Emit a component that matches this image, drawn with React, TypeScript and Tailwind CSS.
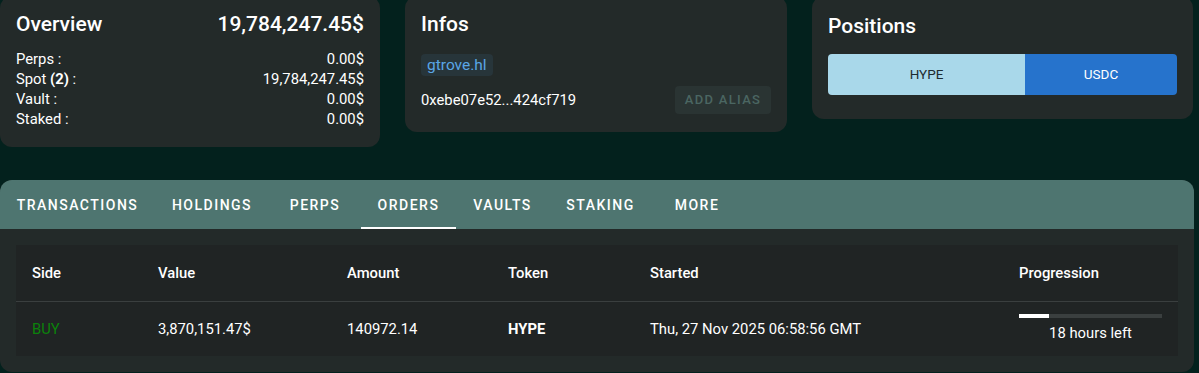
import React from 'react';

const tabs = [
  { label: 'TRANSACTIONS', w: 'w-[155px]' },
  { label: 'HOLDINGS', w: 'w-[114px]' },
  { label: 'PERPS', w: 'w-[92px]' },
  { label: 'ORDERS', w: 'w-[95px]', active: true },
  { label: 'VAULTS', w: 'w-[93px]' },
  { label: 'STAKING', w: 'w-[103px]' },
  { label: 'MORE', w: 'w-[90px]' },
];

const cols = 'grid grid-cols-[126px_189px_161px_142px_369px_1fr]';

function OverviewCard() {
  const rows: [React.ReactNode, string][] = [
    ['Perps :', '0.00$'],
    [<>Spot <b className="font-bold">(2)</b> :</>, '19,784,247.45$'],
    ['Vault :', '0.00$'],
    ['Staked :', '0.00$'],
  ];
  return (
    <div className="bg-[#232a29] rounded-xl px-4 pt-[14px] pb-[18px]">
      <div className="flex justify-between items-center">
        <h2 className="text-[21px] leading-7 font-medium text-white">Overview</h2>
        <span className="text-[21px] leading-7 font-medium text-white">19,784,247.45$</span>
      </div>
      <div className="mt-[11px]">
        {rows.map(([k, v], i) => (
          <div key={i} className="flex justify-between text-[14.8px] leading-5 text-white">
            <span>{k}</span>
            <span>{v}</span>
          </div>
        ))}
      </div>
    </div>
  );
}

function InfosCard() {
  return (
    <div className="bg-[#232a29] rounded-xl px-4 pt-[14px] pb-[18px]">
      <h2 className="text-[21px] leading-7 font-medium text-white">Infos</h2>
      <div className="mt-[15px]">
        <span className="inline-block bg-[#27353a] text-[#5aa6e6] text-[15.5px] leading-[22px] px-[6px] rounded">gtrove.hl</span>
      </div>
      <div className="mt-[9px] flex justify-between items-center">
        <span className="text-[14.8px] text-white">0xebe07e52...424cf719</span>
        <button className="w-[96px] h-[28px] bg-[#2a3433] rounded text-[#4b6662] text-[13px] font-medium tracking-[1.3px]">ADD ALIAS</button>
      </div>
    </div>
  );
}

function PositionsCard() {
  return (
    <div className="bg-[#232a29] rounded-xl px-4 pt-[14px] pb-[24px]">
      <h2 className="text-[21px] leading-7 font-medium text-white mt-[2px]">Positions</h2>
      <div className="mt-[14px] flex h-[41px]">
        <div className="w-[197px] bg-[#a9d8ea] rounded-l-sm flex items-center justify-center text-[13.5px] text-[#1d2b30]">HYPE</div>
        <div className="flex-1 bg-[#2673cc] rounded-r-sm flex items-center justify-center text-[13.5px] text-white">USDC</div>
      </div>
    </div>
  );
}

export default function App() {
  return (
    <div className="bg-[#03211d] h-[373px] overflow-hidden font-['Roboto',sans-serif]">
      <div className="w-[1194px]">
        <div className="grid grid-cols-[380px_382px_381px] gap-[25px] items-start -mt-[4px]">
          <OverviewCard />
          <InfosCard />
          <PositionsCard />
        </div>

        <div className="mt-[33px] bg-[#232a29] rounded-xl overflow-hidden">
          <div className="bg-[#4e7570] h-[49px] flex">
            {tabs.map((t) => (
              <div key={t.label} className={`${t.w} relative flex items-center justify-center text-sm font-medium tracking-[1.5px] text-white`}>
                {t.label}
                {t.active && <div className="absolute left-0 right-0 bottom-0 h-[2px] bg-white" />}
              </div>
            ))}
          </div>
          <div className="p-4">
            <div className="bg-[#202424] text-white text-[14.8px]">
              <div className={`${cols} h-[57px] items-center border-b border-[#3a3f3f] font-medium`}>
                <div className="pl-4">Side</div>
                <div className="pl-4">Value</div>
                <div className="pl-4">Amount</div>
                <div className="pl-4">Token</div>
                <div className="pl-4">Started</div>
                <div className="px-4">Progression</div>
              </div>
              <div className={`${cols} h-[54px] items-center`}>
                <div className="pl-4 text-[#0b820b]">BUY</div>
                <div className="pl-4">3,870,151.47$</div>
                <div className="pl-4">140972.14</div>
                <div className="pl-4 font-bold">HYPE</div>
                <div className="pl-4">Thu, 27 Nov 2025 06:58:56 GMT</div>
                <div className="px-4 self-start pt-[12px] flex flex-col">
                  <div className="h-1 bg-[#3a3f3f]">
                    <div className="h-1 bg-white w-[21%]" />
                  </div>
                  <div className="mt-[5px] text-center leading-5">18 hours left</div>
                </div>
              </div>
            </div>
          </div>
        </div>
      </div>
    </div>
  );
}
